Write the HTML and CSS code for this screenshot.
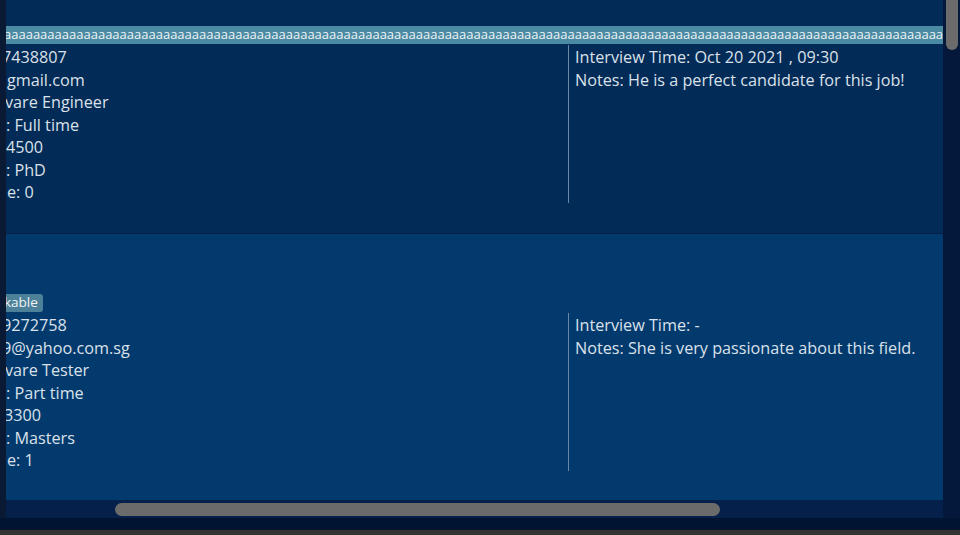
FILE: index.html
```html
<!DOCTYPE html>
<html>
<head>
<meta charset="utf-8">
<link rel="stylesheet" href="styles.css">
</head>
<body>
<div class="app">
  <div class="main">
    <div class="gutter"></div>
    <div class="viewport-col">
      <div class="list">
        <div class="card card-a">
          <div class="tags"><span class="tag tag-long">aaaaaaaaaaaaaaaaaaaaaaaaaaaaaaaaaaaaaaaaaaaaaaaaaaaaaaaaaaaaaaaaaaaaaaaaaaaaaaaaaaaaaaaaaaaaaaaaaaaaaaaaaaaaaaaaaaaaaaaaaaaaaaaaaaaaaaaaaaaaaaaaaaaaa</span></div>
          <div class="body">
            <div class="left">
              <div class="line shift-4">7438807</div>
              <div class="line shift1">gmail.com</div>
              <div class="line shift-1">vare Engineer</div>
              <div class="line">: Full time</div>
              <div class="line">4500</div>
              <div class="line">: PhD</div>
              <div class="line shift1">e: 0</div>
            </div>
            <div class="right">
              <div class="line">Interview Time: Oct 20 2021 , 09:30</div>
              <div class="line">Notes: He is a perfect candidate for this job!</div>
            </div>
          </div>
        </div>
        <div class="card card-b">
          <div class="tags"><span class="tag tag-short">kable</span></div>
          <div class="body">
            <div class="left">
              <div class="line shift-4">9272758</div>
              <div class="line shift-4">9@yahoo.com.sg</div>
              <div class="line shift-1">vare Tester</div>
              <div class="line">: Part time</div>
              <div class="line shift-2">3300</div>
              <div class="line">: Masters</div>
              <div class="line shift1">e: 1</div>
            </div>
            <div class="right">
              <div class="line">Interview Time: -</div>
              <div class="line">Notes: She is very passionate about this field.</div>
            </div>
          </div>
        </div>
      </div>
      <div class="hscroll"><div class="hthumb"></div></div>
    </div>
    <div class="vscroll"><div class="vthumb"></div></div>
  </div>
  <div class="footer-dark"></div>
  <div class="footer-gray"></div>
</div>
</body>
</html>
```

FILE: styles.css
```css
* { box-sizing: border-box; }
html, body {
  margin: 0;
  padding: 0;
  width: 960px;
  height: 535px;
  overflow: hidden;
  background: #011431;
  font-family: "Open Sans", "Noto Sans", sans-serif;
}
.app {
  display: flex;
  flex-direction: column;
  width: 960px;
  height: 535px;
}
.main {
  display: flex;
  height: 518px;
}
.gutter {
  width: 6px;
  background: #0a1a35;
}
.viewport-col {
  width: 937px;
  display: flex;
  flex-direction: column;
}
.list {
  height: 500px;
  overflow: hidden;
  background: #033a6e;
}
.card {
  overflow: hidden;
  color: #dbe1ea;
  font-size: 16.2px;
}
.card-a {
  height: 234px;
  padding-top: 26px;
  background: #022b57;
  border-bottom: 1px solid #021f45;
}
.card-b {
  height: 266px;
  padding-top: 60px;
  background: #033a6e;
}
.tags {
  height: 18px;
  display: flex;
  white-space: nowrap;
  overflow: hidden;
}
.tag {
  display: block;
  height: 18px;
  line-height: 17px;
  font-size: 13px;
  color: #eef3f6;
  background: #4a8aa2;
  overflow: hidden;
}
.tag-long {
  width: 937px;
  text-indent: -2px;
}
.tag-short {
  width: 37px;
  font-size: 13.5px;
  text-indent: -2px;
  border-radius: 0 3px 3px 0;
  background: #4c8199;
}
.body {
  display: grid;
  grid-template-columns: 562px 1fr;
  margin-top: 1px;
  padding-top: 1px;
}
.left {
  overflow: hidden;
  padding-left: 0;
}
.right {
  border-left: 1px solid #6a87a8;
  padding-left: 6px;
  height: 158px;
  margin-top: -1px;
  padding-top: 1px;
}
.line {
  height: 22.5px;
  line-height: 22.5px;
  white-space: nowrap;
}
.shift-4 { text-indent: -4px; }
.shift-2 { text-indent: -2px; }
.shift-1 { text-indent: -1px; }
.shift1 { text-indent: 1px; }
.hscroll {
  height: 18px;
  background: #05204a;
  padding-top: 3px;
  padding-left: 109px;
}
.hthumb {
  width: 605px;
  height: 13px;
  border-radius: 7px;
  background: #6b6b6b;
}
.vscroll {
  width: 17px;
  background: #03183a;
  padding: 0 2px 0 3px;
}
.vthumb {
  height: 50px;
  border-radius: 0 0 6px 6px;
  background: #6b6b6b;
}
.footer-dark {
  height: 12px;
  background: #011431;
}
.footer-gray {
  height: 5px;
  background: #343434;
}
```
